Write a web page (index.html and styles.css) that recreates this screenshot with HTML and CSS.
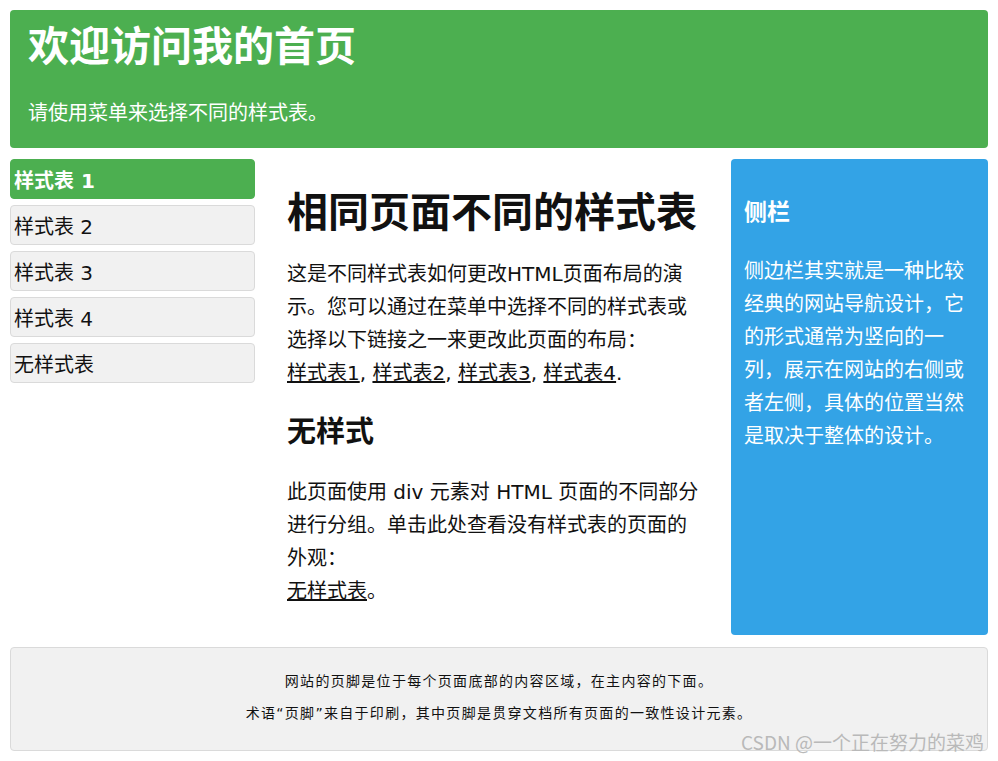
FILE: index.html
```html
<!DOCTYPE html>
<html lang="zh-CN">
<head>
<meta charset="utf-8">
<title>欢迎访问我的首页</title>
<link rel="stylesheet" href="styles.css">
</head>
<body>
<div class="header">
  <h1 class="header-title">欢迎访问我的首页</h1>
  <p class="header-sub">请使用菜单来选择不同的样式表。</p>
</div>
<div class="layout">
  <ul class="menu">
    <li class="menu-item active">样式表 1</li>
    <li class="menu-item">样式表 2</li>
    <li class="menu-item">样式表 3</li>
    <li class="menu-item">样式表 4</li>
    <li class="menu-item">无样式表</li>
  </ul>
  <div class="main">
    <h1 class="main-title">相同页面不同的样式表</h1>
    <p class="text">这是不同样式表如何更改HTML页面布局的演示。您可以通过在菜单中选择不同的样式表或选择以下链接之一来更改此页面的布局：<br><a href="#">样式表1</a>, <a href="#">样式表2</a>, <a href="#">样式表3</a>, <a href="#">样式表4</a>.</p>
    <h2 class="sub-title">无样式</h2>
    <p class="text">此页面使用 div 元素对 HTML 页面的不同部分进行分组。单击此处查看没有样式表的页面的<br>外观：<br><a href="#">无样式表</a>。</p>
  </div>
  <div class="aside">
    <h2 class="aside-title">侧栏</h2>
    <p class="aside-text">侧边栏其实就是一种比较经典的网站导航设计，它的形式通常为竖向的一列，展示在网站的右侧或者左侧，具体的位置当然是取决于整体的设计。</p>
  </div>
</div>
<div class="footer">
  <p class="footer-line">网站的页脚是位于每个页面底部的内容区域，在主内容的下面。</p>
  <p class="footer-line">术语“页脚”来自于印刷，其中页脚是贯穿文档所有页面的一致性设计元素。</p>
</div>
<div class="watermark">CSDN @一个正在努力的菜鸡</div>
</body>
</html>
```
FILE: styles.css
```css
* { box-sizing: border-box; }
html, body { margin: 0; }
body {
  padding: 10px;
  font-family: "DejaVu Sans", "Noto Sans CJK SC", sans-serif;
  color: #111;
  background: #fff;
  position: relative;
  min-height: 761px;
}
.header {
  background: #4caf50;
  color: #fff;
  border-radius: 4px;
  padding: 13px 18px 19px;
  height: 138px;
}
.header-title {
  margin: 0;
  font-size: 41px;
  line-height: 48px;
  font-weight: bold;
}
.header-sub {
  margin: 26px 0 0;
  font-size: 20px;
  line-height: 33px;
}
.layout {
  display: grid;
  grid-template-columns: 245px 1fr 257px;
  margin-top: 11px;
}
.menu {
  list-style: none;
  margin: 0;
  padding: 0;
}
.menu-item {
  height: 40px;
  margin-bottom: 6px;
  padding: 0 3px;
  display: flex;
  align-items: center;
  font-size: 20px;
  background: #f1f1f1;
  border: 1px solid #dadada;
  border-radius: 4px;
  color: #111;
}
.menu-item.active {
  background: #4caf50;
  border-color: #4caf50;
  color: #fff;
  font-weight: bold;
}
.main {
  padding: 30px 29px 27px 32px;
}
.main-title {
  margin: 0;
  font-size: 41px;
  line-height: 48px;
  font-weight: bold;
}
.text {
  margin: 21px 0 0;
  font-size: 20px;
  line-height: 33px;
}
.text a { color: inherit; }
.sub-title {
  margin: 24px 0 0;
  font-size: 29px;
  line-height: 36px;
  font-weight: bold;
}
.sub-title + .text { margin-top: 26px; }
.aside {
  background: #33a3e6;
  color: #fff;
  border-radius: 4px;
  padding: 38px 20px 20px 13px;
}
.aside-title {
  margin: 0;
  font-size: 23px;
  line-height: 30px;
  font-weight: bold;
}
.aside-text {
  margin: 28px 0 0;
  font-size: 20px;
  line-height: 33px;
}
.footer {
  margin-top: 12px;
  height: 104px;
  background: #f1f1f1;
  border: 1px solid #dadada;
  border-radius: 4px;
  padding: 23px 10px 0;
  text-align: center;
  font-size: 14px;
  letter-spacing: 1.3px;
  color: #111;
}
.footer-line {
  margin: 0 0 12px;
  line-height: 20px;
}
.watermark {
  position: absolute;
  top: 729px;
  right: 14px;
  font-family: "Noto Sans CJK SC", sans-serif;
  font-size: 19px;
  line-height: 26px;
  color: #b9b9b9;
}
```
